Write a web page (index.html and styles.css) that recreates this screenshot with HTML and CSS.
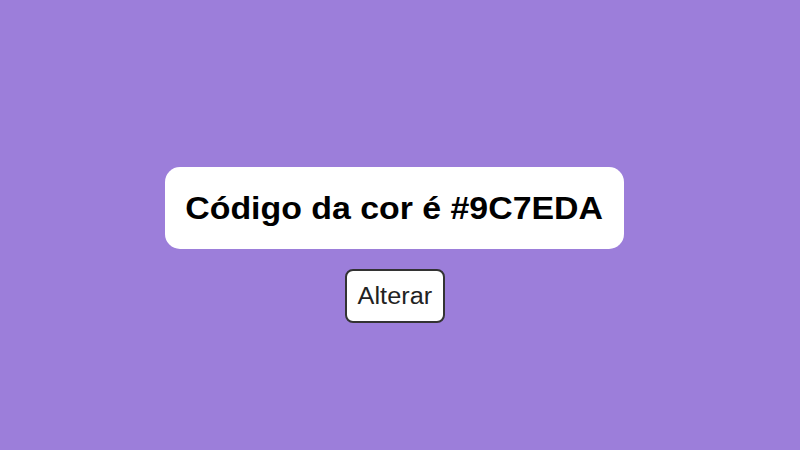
FILE: index.html
```html
<!DOCTYPE html>
<html lang="pt">
<head>
<meta charset="utf-8">
<link rel="stylesheet" href="styles.css">
</head>
<body>
<main class="page">
  <div class="card"><span class="card-text">Código da cor é #9C7EDA</span></div>
  <button class="btn"><span class="btn-text">Alterar</span></button>
</main>
</body>
</html>
```
FILE: styles.css
```css
html, body {
  margin: 0;
  padding: 0;
  height: 100%;
}
body {
  background: #9C7EDA;
  font-family: "Liberation Sans", Arial, sans-serif;
}
.page {
  display: flex;
  flex-direction: column;
  align-items: center;
  padding-top: 167px;
  padding-right: 11px;
  gap: 20px;
}
.card {
  background: #fff;
  border-radius: 15px;
  height: 82px;
  width: 459px;
  box-sizing: border-box;
  display: flex;
  align-items: center;
  justify-content: center;
  font-weight: bold;
  font-size: 30.5px;
  color: #000;
}
.card-text {
  display: inline-block;
  transform: scaleX(1.11);
}
.btn {
  font-family: "Liberation Sans", Arial, sans-serif;
  font-size: 23px;
  color: #222;
  background: #fff;
  border: 2px solid #333;
  border-radius: 8px;
  width: 100px;
  height: 54px;
  padding: 0;
}
.btn-text {
  display: inline-block;
  transform: scaleX(1.1);
}
```
